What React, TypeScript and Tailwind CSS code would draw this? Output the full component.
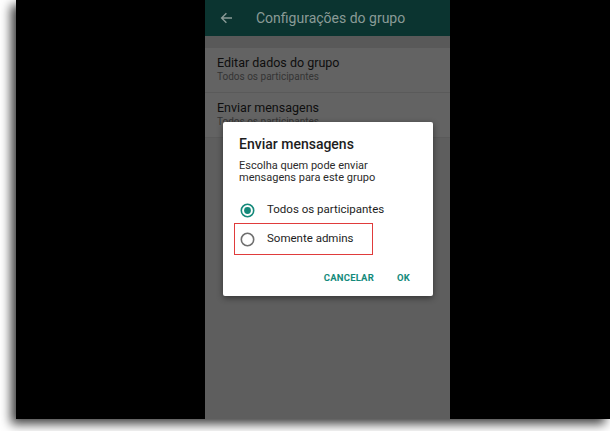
import React from "react";

const font = { fontFamily: "Roboto, 'Noto Sans', Arial, sans-serif" };

function Radio({ checked }: { checked: boolean }) {
  return (
    <svg width="15" height="15" viewBox="0 0 15 15" className="shrink-0">
      <circle
        cx="7.5"
        cy="7.5"
        r="6.2"
        fill="none"
        stroke={checked ? "#14897a" : "#6f6f6f"}
        strokeWidth="1.6"
      />
      {checked && <circle cx="7.5" cy="7.5" r="3.4" fill="#14897a" />}
    </svg>
  );
}

function SettingRow({ title, sub, last }: { title: string; sub: string; last?: boolean }) {
  return (
    <div className={`pl-[12px] pt-[7px] pb-[9px] ${last ? "" : "border-b border-[#5a5a5a]"}`}>
      <div className="text-[12.5px] leading-[16px] text-[#0e0e0e]">{title}</div>
      <div className="text-[10px] leading-[12px] text-[#343434]">{sub}</div>
    </div>
  );
}

export default function App() {
  return (
    <div className="w-[610px] h-[431px] bg-white overflow-hidden" style={font}>
      <div className="ml-[16px] h-[419px] bg-black shadow-[-5px_5px_10px_rgba(0,0,0,0.75)] flex">
        <div className="ml-[189px] w-[245px] h-full relative bg-[#5e5e5e] flex flex-col">
          {/* app bar */}
          <div className="h-[36px] bg-[#0b3430] flex items-center">
            <svg width="13" height="12" viewBox="0 0 13 12" className="ml-[15px]">
              <path
                d="M12 6H1.8M6.4 1.2L1.6 6l4.8 4.8"
                fill="none"
                stroke="#8a9b97"
                strokeWidth="1.4"
              />
            </svg>
            <span className="ml-[23px] text-[14px] text-[#8a9b97]">Configurações do grupo</span>
          </div>
          <div className="h-[12px] bg-[#595959]" />
          <div className="bg-[#636363] border-b border-[#5a5a5a]">
            <SettingRow title="Editar dados do grupo" sub="Todos os participantes" />
            <SettingRow title="Enviar mensagens" sub="Todos os participantes" last />
          </div>

          {/* dialog */}
          <div className="absolute left-[18px] top-[122px] w-[210px] h-[174px] bg-white rounded-[2px] shadow-[0_2px_6px_rgba(0,0,0,0.45)] flex flex-col">
            <div className="pl-[16px] pt-[13px] text-[14px] leading-[18px] font-medium text-[#1d1d1d]">
              Enviar mensagens
            </div>
            <div className="pl-[16px] pt-[7px] text-[11px] leading-[12px] text-[#2c2c2c]">
              Escolha quem pode enviar
              <br />
              mensagens para este grupo
            </div>
            <div className="mt-[18px] flex items-center pl-[17px] h-[16px]">
              <Radio checked />
              <span className="ml-[12px] text-[11.5px] text-[#1d1d1d]">Todos os participantes</span>
            </div>
            <div className="mt-[5px] ml-[11px] w-[139px] h-[32px] border-[1.5px] border-[#e03b3b] flex items-center pl-[5px]">
              <Radio checked={false} />
              <span className="ml-[12px] text-[11.5px] text-[#1d1d1d]">Somente admins</span>
            </div>
            <div className="mt-[16px] flex items-center justify-end pr-[23px] gap-[23px] text-[9.5px] font-bold text-[#148a7b] tracking-[0.2px]">
              <span>CANCELAR</span>
              <span>OK</span>
            </div>
          </div>
        </div>
      </div>
    </div>
  );
}
